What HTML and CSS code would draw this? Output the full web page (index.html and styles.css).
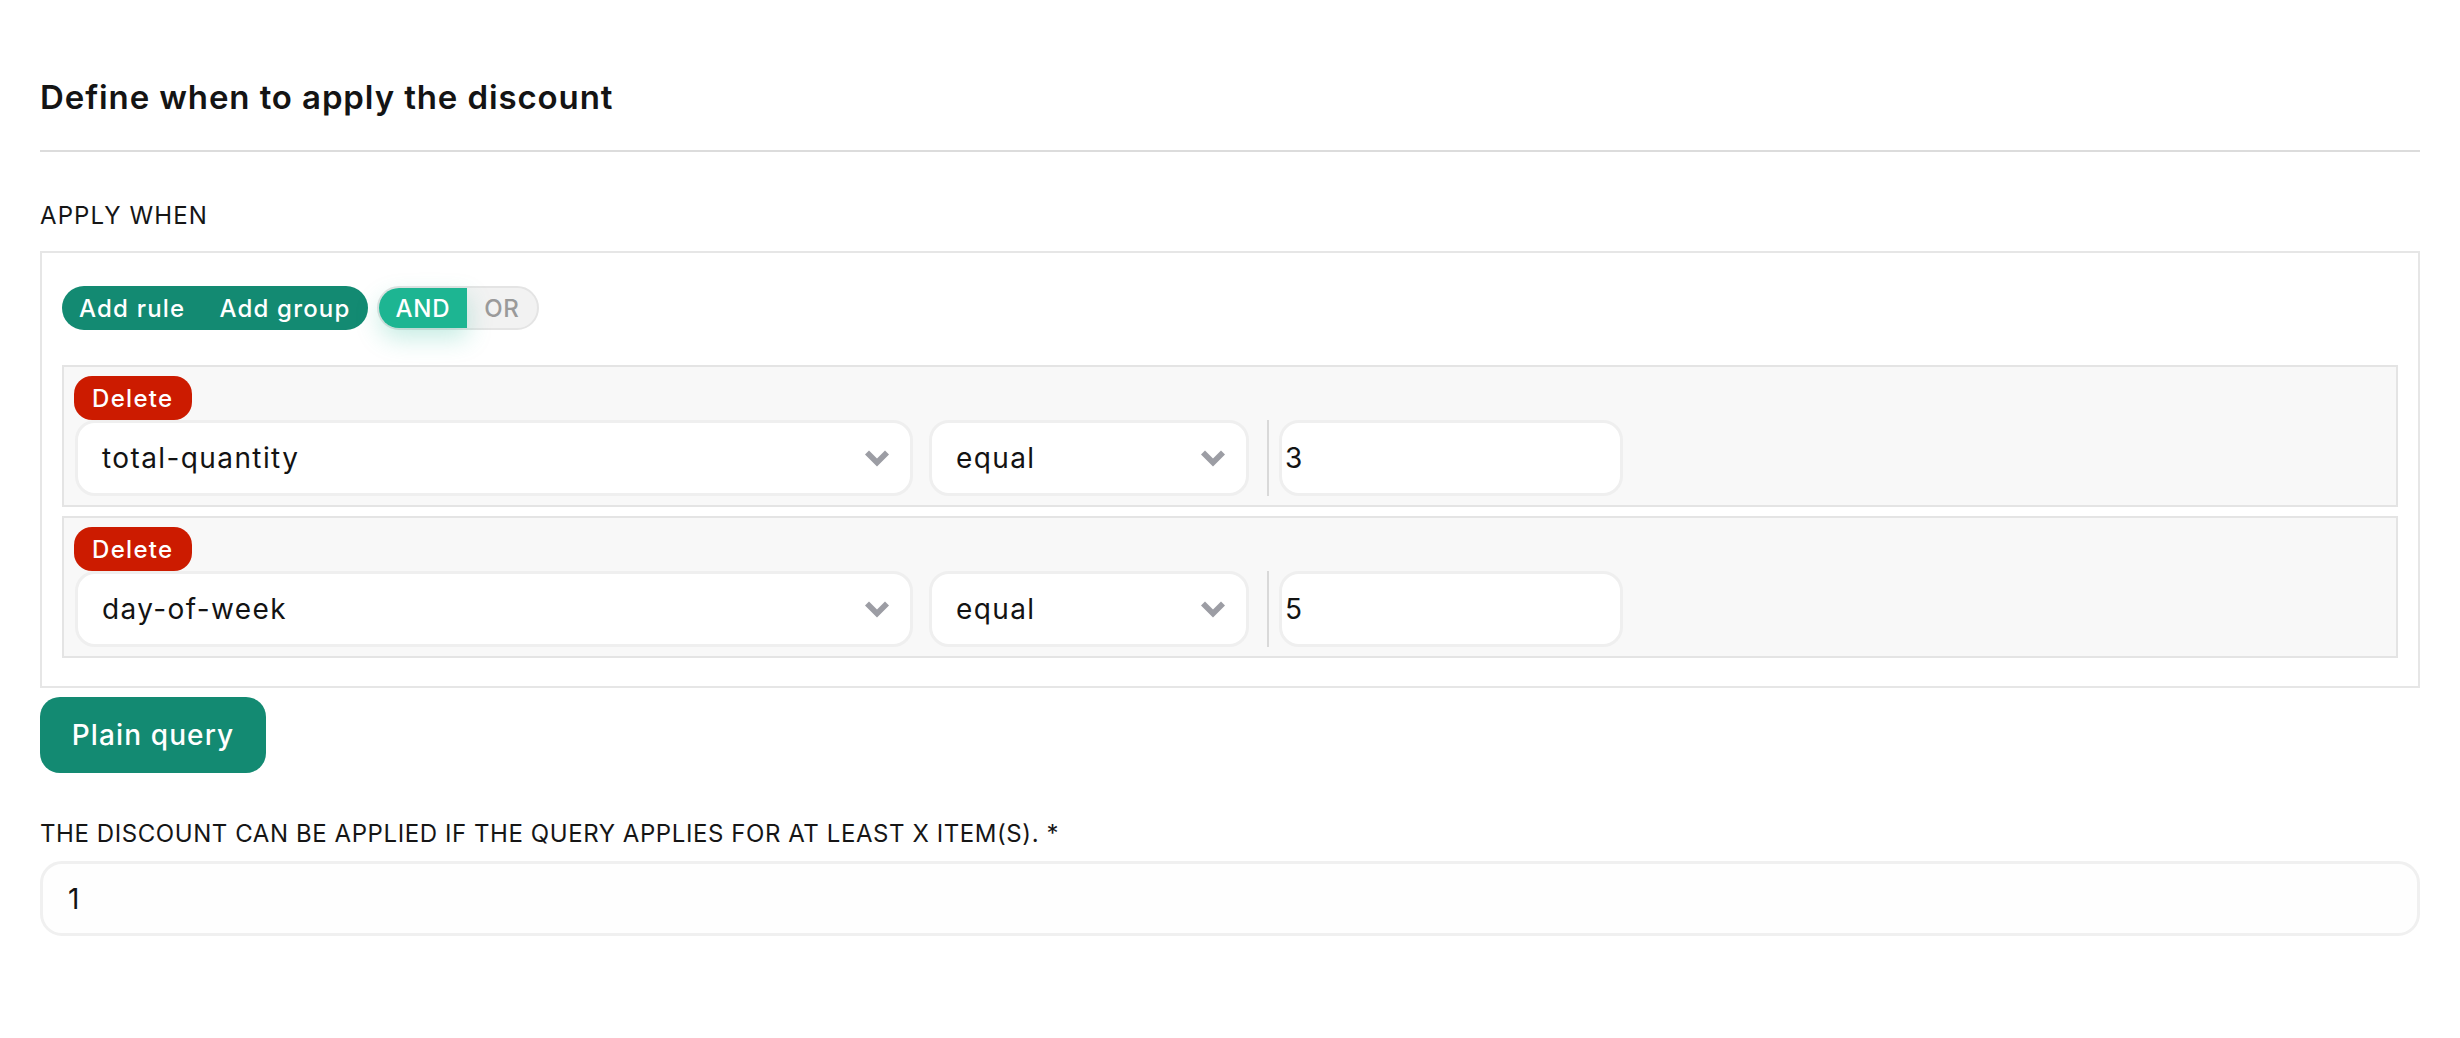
FILE: index.html
```html
<!DOCTYPE html>
<html lang="en">
<head>
<meta charset="utf-8">
<title>Define when to apply the discount</title>
<link rel="stylesheet" href="styles.css">
</head>
<body>
<div class="page">
  <h2 class="title">Define when to apply the discount</h2>
  <hr class="rule-line">
  <div class="field-label label-apply">APPLY WHEN</div>
  <div class="query-builder">
    <div class="qb-header">
      <div class="btn-group">
        <button class="btn-add">Add rule</button>
        <button class="btn-add">Add group</button>
      </div>
      <div class="combinator">
        <span class="comb comb-active">AND</span>
        <span class="comb">OR</span>
      </div>
    </div>
    <div class="qb-rule">
      <button class="btn-delete">Delete</button>
      <div class="rule-fields">
        <div class="select select-field"><span class="select-text">total-quantity</span><svg class="chev" viewBox="0 0 24 16"><polygon points="0,4.5 4,0.5 12,8.5 20,0.5 24,4.5 12,16.5" fill="#9c9da4"/></svg></div>
        <div class="select select-op"><span class="select-text">equal</span><svg class="chev" viewBox="0 0 24 16"><polygon points="0,4.5 4,0.5 12,8.5 20,0.5 24,4.5 12,16.5" fill="#9c9da4"/></svg></div>
        <div class="divider"></div>
        <div class="value-input">3</div>
      </div>
    </div>
    <div class="qb-rule">
      <button class="btn-delete">Delete</button>
      <div class="rule-fields">
        <div class="select select-field"><span class="select-text">day-of-week</span><svg class="chev" viewBox="0 0 24 16"><polygon points="0,4.5 4,0.5 12,8.5 20,0.5 24,4.5 12,16.5" fill="#9c9da4"/></svg></div>
        <div class="select select-op"><span class="select-text">equal</span><svg class="chev" viewBox="0 0 24 16"><polygon points="0,4.5 4,0.5 12,8.5 20,0.5 24,4.5 12,16.5" fill="#9c9da4"/></svg></div>
        <div class="divider"></div>
        <div class="value-input">5</div>
      </div>
    </div>
  </div>
  <button class="btn-plain">Plain query</button>
  <div class="field-label label-min">THE DISCOUNT CAN BE APPLIED IF THE QUERY APPLIES FOR AT LEAST X ITEM(S). *</div>
  <div class="text-input">1</div>
</div>
</body>
</html>
```

FILE: styles.css
```css
* { box-sizing: border-box; }
html, body { margin: 0; padding: 0; background: #ffffff; }
body {
  font-family: Inter, "Open Sans", "DejaVu Sans", sans-serif;
  color: #131313;
}
.page {
  padding: 77px 40px 0 40px;
}
.title {
  margin: 0;
  font-size: 33px;
  line-height: 40px;
  font-weight: 600;
  letter-spacing: 0.027em;
  color: #141414;
}
.rule-line {
  margin: 33px 0 0 0;
  border: 0;
  height: 2px;
  background: #dcdcdc;
}
.field-label {
  font-size: 24px;
  line-height: 28px;
  letter-spacing: 0.024em;
  color: #161616;
}
.label-apply {
  margin-top: 50px;
  letter-spacing: 0.045em;
}
.query-builder {
  margin-top: 21px;
  border: 2px solid #e6e6e6;
  padding: 33px 20px 28px 20px;
  display: flex;
  flex-direction: column;
}
.qb-header {
  display: flex;
  align-items: center;
  gap: 9px;
  margin-bottom: 35px;
}
.btn-group {
  display: flex;
  background: #138a72;
  border-radius: 22px;
  height: 44px;
  overflow: hidden;
}
.btn-add {
  border: 0;
  background: transparent;
  color: #ffffff;
  font-family: inherit;
  font-size: 24px;
  font-weight: 500;
  letter-spacing: 0.05em;
  padding: 0 17px;
  height: 44px;
}
.combinator {
  display: flex;
  height: 44px;
  border: 2px solid #e4e4e4;
  border-radius: 22px;
  background: #f2f2f2;
}
.comb {
  display: flex;
  align-items: center;
  padding: 0 17px;
  font-size: 24px;
  font-weight: 500;
  letter-spacing: 0.03em;
  color: #9a9a9a;
}
.comb-active {
  background: #1db592;
  color: #ffffff;
  border-radius: 20px 0 0 20px;
  box-shadow: 0 10px 24px rgba(29, 181, 146, 0.26);
}
.qb-rule {
  background: #f8f8f8;
  border: 2px solid #e4e4e4;
  padding: 9px 10px;
  display: flex;
  flex-direction: column;
  align-items: flex-start;
}
.qb-rule + .qb-rule { margin-top: 9px; }
.btn-delete {
  border: 0;
  background: #cc1b00;
  color: #ffffff;
  font-family: inherit;
  font-size: 24px;
  font-weight: 500;
  letter-spacing: 0.055em;
  height: 44px;
  padding: 0 18px;
  border-radius: 18px;
}
.rule-fields {
  display: flex;
  align-items: stretch;
  height: 76px;
}
.select {
  display: flex;
  align-items: center;
  justify-content: space-between;
  background: #ffffff;
  border: 3px solid #efefef;
  border-radius: 20px;
  padding: 0 21px 0 24px;
  font-size: 28px;
  letter-spacing: 0.05em;
}
.select-field { width: 838px; margin-left: 1px; }
.select-op { width: 320px; margin-left: 16px; }
.chev { width: 24px; height: 16px; display: block; overflow: visible; }
.divider {
  width: 2px;
  background: #d9d9d9;
  margin: 0 10px 0 18px;
}
.value-input {
  width: 344px;
  display: flex;
  align-items: center;
  background: #ffffff;
  border: 3px solid #efefef;
  border-radius: 20px;
  padding: 0 3px;
  font-size: 28px;
}
.btn-plain {
  margin-top: 9px;
  border: 0;
  background: #138a72;
  color: #ffffff;
  font-family: inherit;
  font-size: 28px;
  font-weight: 500;
  letter-spacing: 0.04em;
  width: 226px;
  height: 76px;
  border-radius: 20px;
}
.label-min { margin-top: 47px; }
.text-input {
  margin-top: 13px;
  height: 75px;
  display: flex;
  align-items: center;
  border: 3px solid #f0f0f0;
  border-radius: 22px;
  padding: 0 25px;
  font-size: 28px;
  background: #fefefe;
}
```
